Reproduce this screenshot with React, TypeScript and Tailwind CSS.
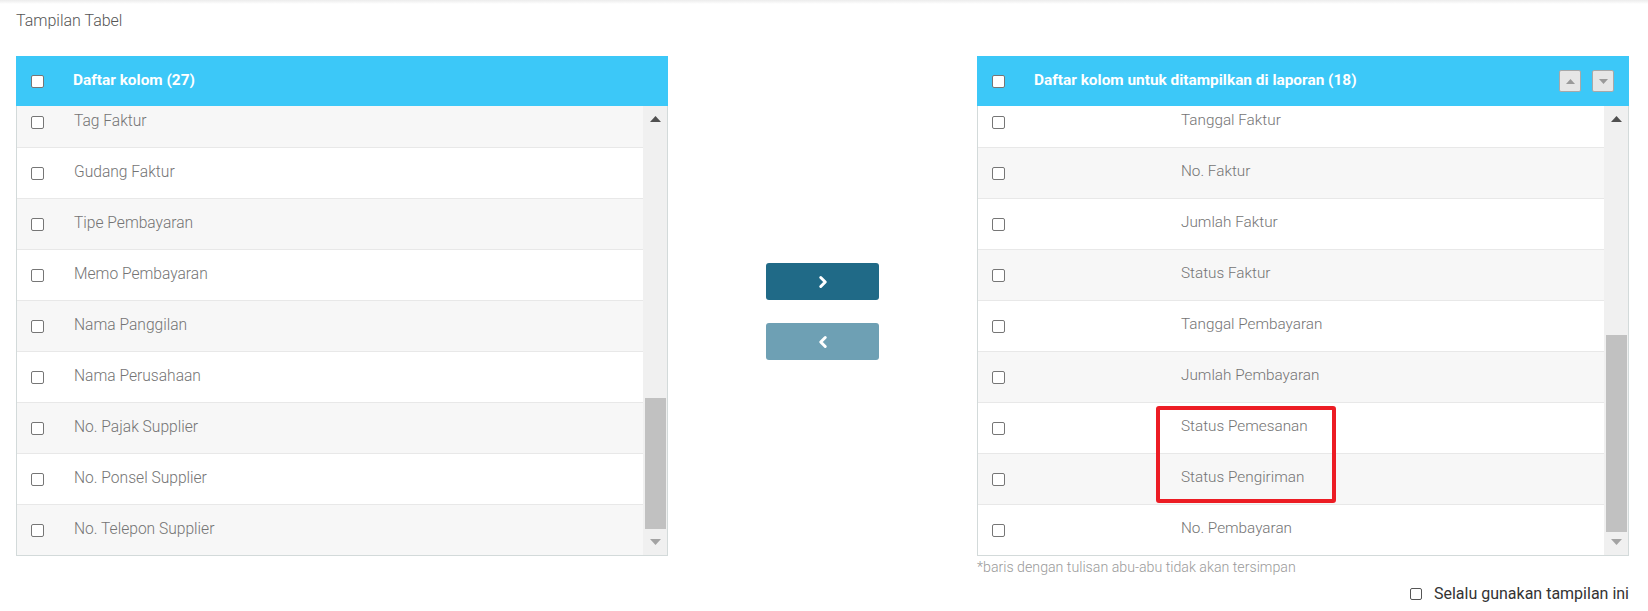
import React from "react";
import { ChevronRight, ChevronLeft } from "lucide-react";

const leftItems = [
  "Tag Faktur",
  "Gudang Faktur",
  "Tipe Pembayaran",
  "Memo Pembayaran",
  "Nama Panggilan",
  "Nama Perusahaan",
  "No. Pajak Supplier",
  "No. Ponsel Supplier",
  "No. Telepon Supplier",
];

const rightItems = [
  "Tanggal Faktur",
  "No. Faktur",
  "Jumlah Faktur",
  "Status Faktur",
  "Tanggal Pembayaran",
  "Jumlah Pembayaran",
  "Status Pemesanan",
  "Status Pengiriman",
  "No. Pembayaran",
];

function Box({ className = "" }: { className?: string }) {
  return (
    <span
      className={
        "block h-[13px] w-[13px] rounded-[2px] border border-[#767676] bg-white " +
        className
      }
    />
  );
}

function Tri({ up, color }: { up: boolean; color: string }) {
  return (
    <svg width="11" height="6" viewBox="0 0 11 6">
      {up ? (
        <polygon points="0,6 11,6 5.5,0" fill={color} />
      ) : (
        <polygon points="0,0 11,0 5.5,6" fill={color} />
      )}
    </svg>
  );
}

function Scrollbar({ thumbTop, thumbHeight }: { thumbTop: number; thumbHeight: number }) {
  return (
    <div className="relative w-[24px] shrink-0 bg-[#f0f0f0]">
      <div className="absolute left-0 right-0 top-[10px] flex justify-center">
        <Tri up color="#505050" />
      </div>
      <div
        className="absolute left-[2px] right-[1px] bg-[#c1c1c1]"
        style={{ top: thumbTop, height: thumbHeight }}
      />
      <div className="absolute bottom-[10px] left-0 right-0 flex justify-center">
        <Tri up={false} color="#a3a3a3" />
      </div>
    </div>
  );
}

function Panel({
  title,
  items,
  firstGray,
  cellWidth,
  textClass,
  thumbTop,
  thumbHeight,
  withSort,
}: {
  title: string;
  items: string[];
  firstGray: boolean;
  cellWidth: string;
  textClass: string;
  thumbTop: number;
  thumbHeight: number;
  withSort?: boolean;
}) {
  return (
    <div className="flex w-[652px] shrink-0 flex-col">
      <div className="flex h-[50px] items-center bg-[#3cc8f8]">
        <div className="flex w-[57px] shrink-0 pl-[15px]">
          <Box />
        </div>
        <div className="flex-1 pb-[1px] text-[15.4px] font-bold text-white">{title}</div>
        {withSort && (
          <div className="mr-[15px] flex gap-[11px]">
            <div className="flex h-[22px] w-[22px] items-center justify-center rounded-[2px] border border-[#a8a8a8] bg-[#e6e6e6]">
              <svg width="9" height="5" viewBox="0 0 9 5">
                <polygon points="0,5 9,5 4.5,0" fill="#9a9a9a" />
              </svg>
            </div>
            <div className="flex h-[22px] w-[22px] items-center justify-center rounded-[2px] border border-[#a8a8a8] bg-[#e6e6e6]">
              <svg width="9" height="5" viewBox="0 0 9 5">
                <polygon points="0,0 9,0 4.5,5" fill="#9a9a9a" />
              </svg>
            </div>
          </div>
        )}
      </div>
      <div className="flex h-[450px] border-x border-b border-[#d3dada]">
        <div className="h-[449px] flex-1 overflow-hidden">
          <div className="-mt-[9px]">
            {items.map((it, i) => {
              const gray = firstGray ? i % 2 === 0 : i % 2 === 1;
              return (
                <div
                  key={it}
                  className={
                    "flex h-[51px] items-center border-b border-[#e8e8e8] " +
                    (gray ? "bg-[#f7f7f7]" : "bg-white")
                  }
                >
                  <div className={"flex shrink-0 pl-[14px] " + cellWidth}>
                    <Box />
                  </div>
                  <div className={"font-light text-[#747474] " + textClass}>{it}</div>
                </div>
              );
            })}
          </div>
        </div>
        <Scrollbar thumbTop={thumbTop} thumbHeight={thumbHeight} />
      </div>
    </div>
  );
}

export default function App() {
  return (
    <div
      className="relative h-[611px] w-[1648px] overflow-hidden bg-white"
      style={{ fontFamily: "Roboto, 'Noto Sans', sans-serif" }}
    >
      <div className="absolute left-0 right-0 top-0 h-[4px] bg-gradient-to-b from-[#ececec] to-white" />
      <div className="pl-[16px] pr-[19px] pt-[11px]">
        <div className="h-[20px] text-[16px] font-light leading-[20px] text-[#555]">
          Tampilan Tabel
        </div>
        <div className="mt-[25px] flex">
          <Panel
            title="Daftar kolom (27)"
            items={leftItems}
            firstGray
            cellWidth="w-[57px]"
            textClass="text-[15.6px] pb-[0px]"
            thumbTop={292}
            thumbHeight={131}
          />
          <div className="flex flex-1 flex-col items-center pt-[207px]">
            <button className="flex h-[37px] w-[113px] items-center justify-center rounded-[3px] bg-[#206a87]">
              <ChevronRight size={18} strokeWidth={4} color="white" />
            </button>
            <button className="mt-[23px] flex h-[37px] w-[113px] items-center justify-center rounded-[3px] bg-[#6ea0b4]">
              <ChevronLeft size={18} strokeWidth={4} color="white" />
            </button>
          </div>
          <div className="relative flex flex-col">
            <Panel
              title="Daftar kolom untuk ditampilkan di laporan (18)"
              items={rightItems}
              firstGray={false}
              cellWidth="w-[203px]"
              textClass="text-[15.3px] pb-[4px]"
              thumbTop={229}
              thumbHeight={197}
              withSort
            />
            <div className="pointer-events-none absolute left-[179px] top-[350px] h-[97px] w-[180px] rounded-[3px] border-[4px] border-[#ec1c24]" />
            <div className="mt-[3px] text-[14.2px] font-light leading-[17px] text-[#9a9a9a]">
              *baris dengan tulisan abu-abu tidak akan tersimpan
            </div>
            <div className="mt-[8px] flex items-center justify-end">
              <span className="mr-[12px] block h-[12px] w-[12px] rounded-[2px] border border-[#555] bg-white" />
              <span className="text-[16px] leading-[19px] text-[#333]">
                Selalu gunakan tampilan ini
              </span>
            </div>
          </div>
        </div>
      </div>
    </div>
  );
}
